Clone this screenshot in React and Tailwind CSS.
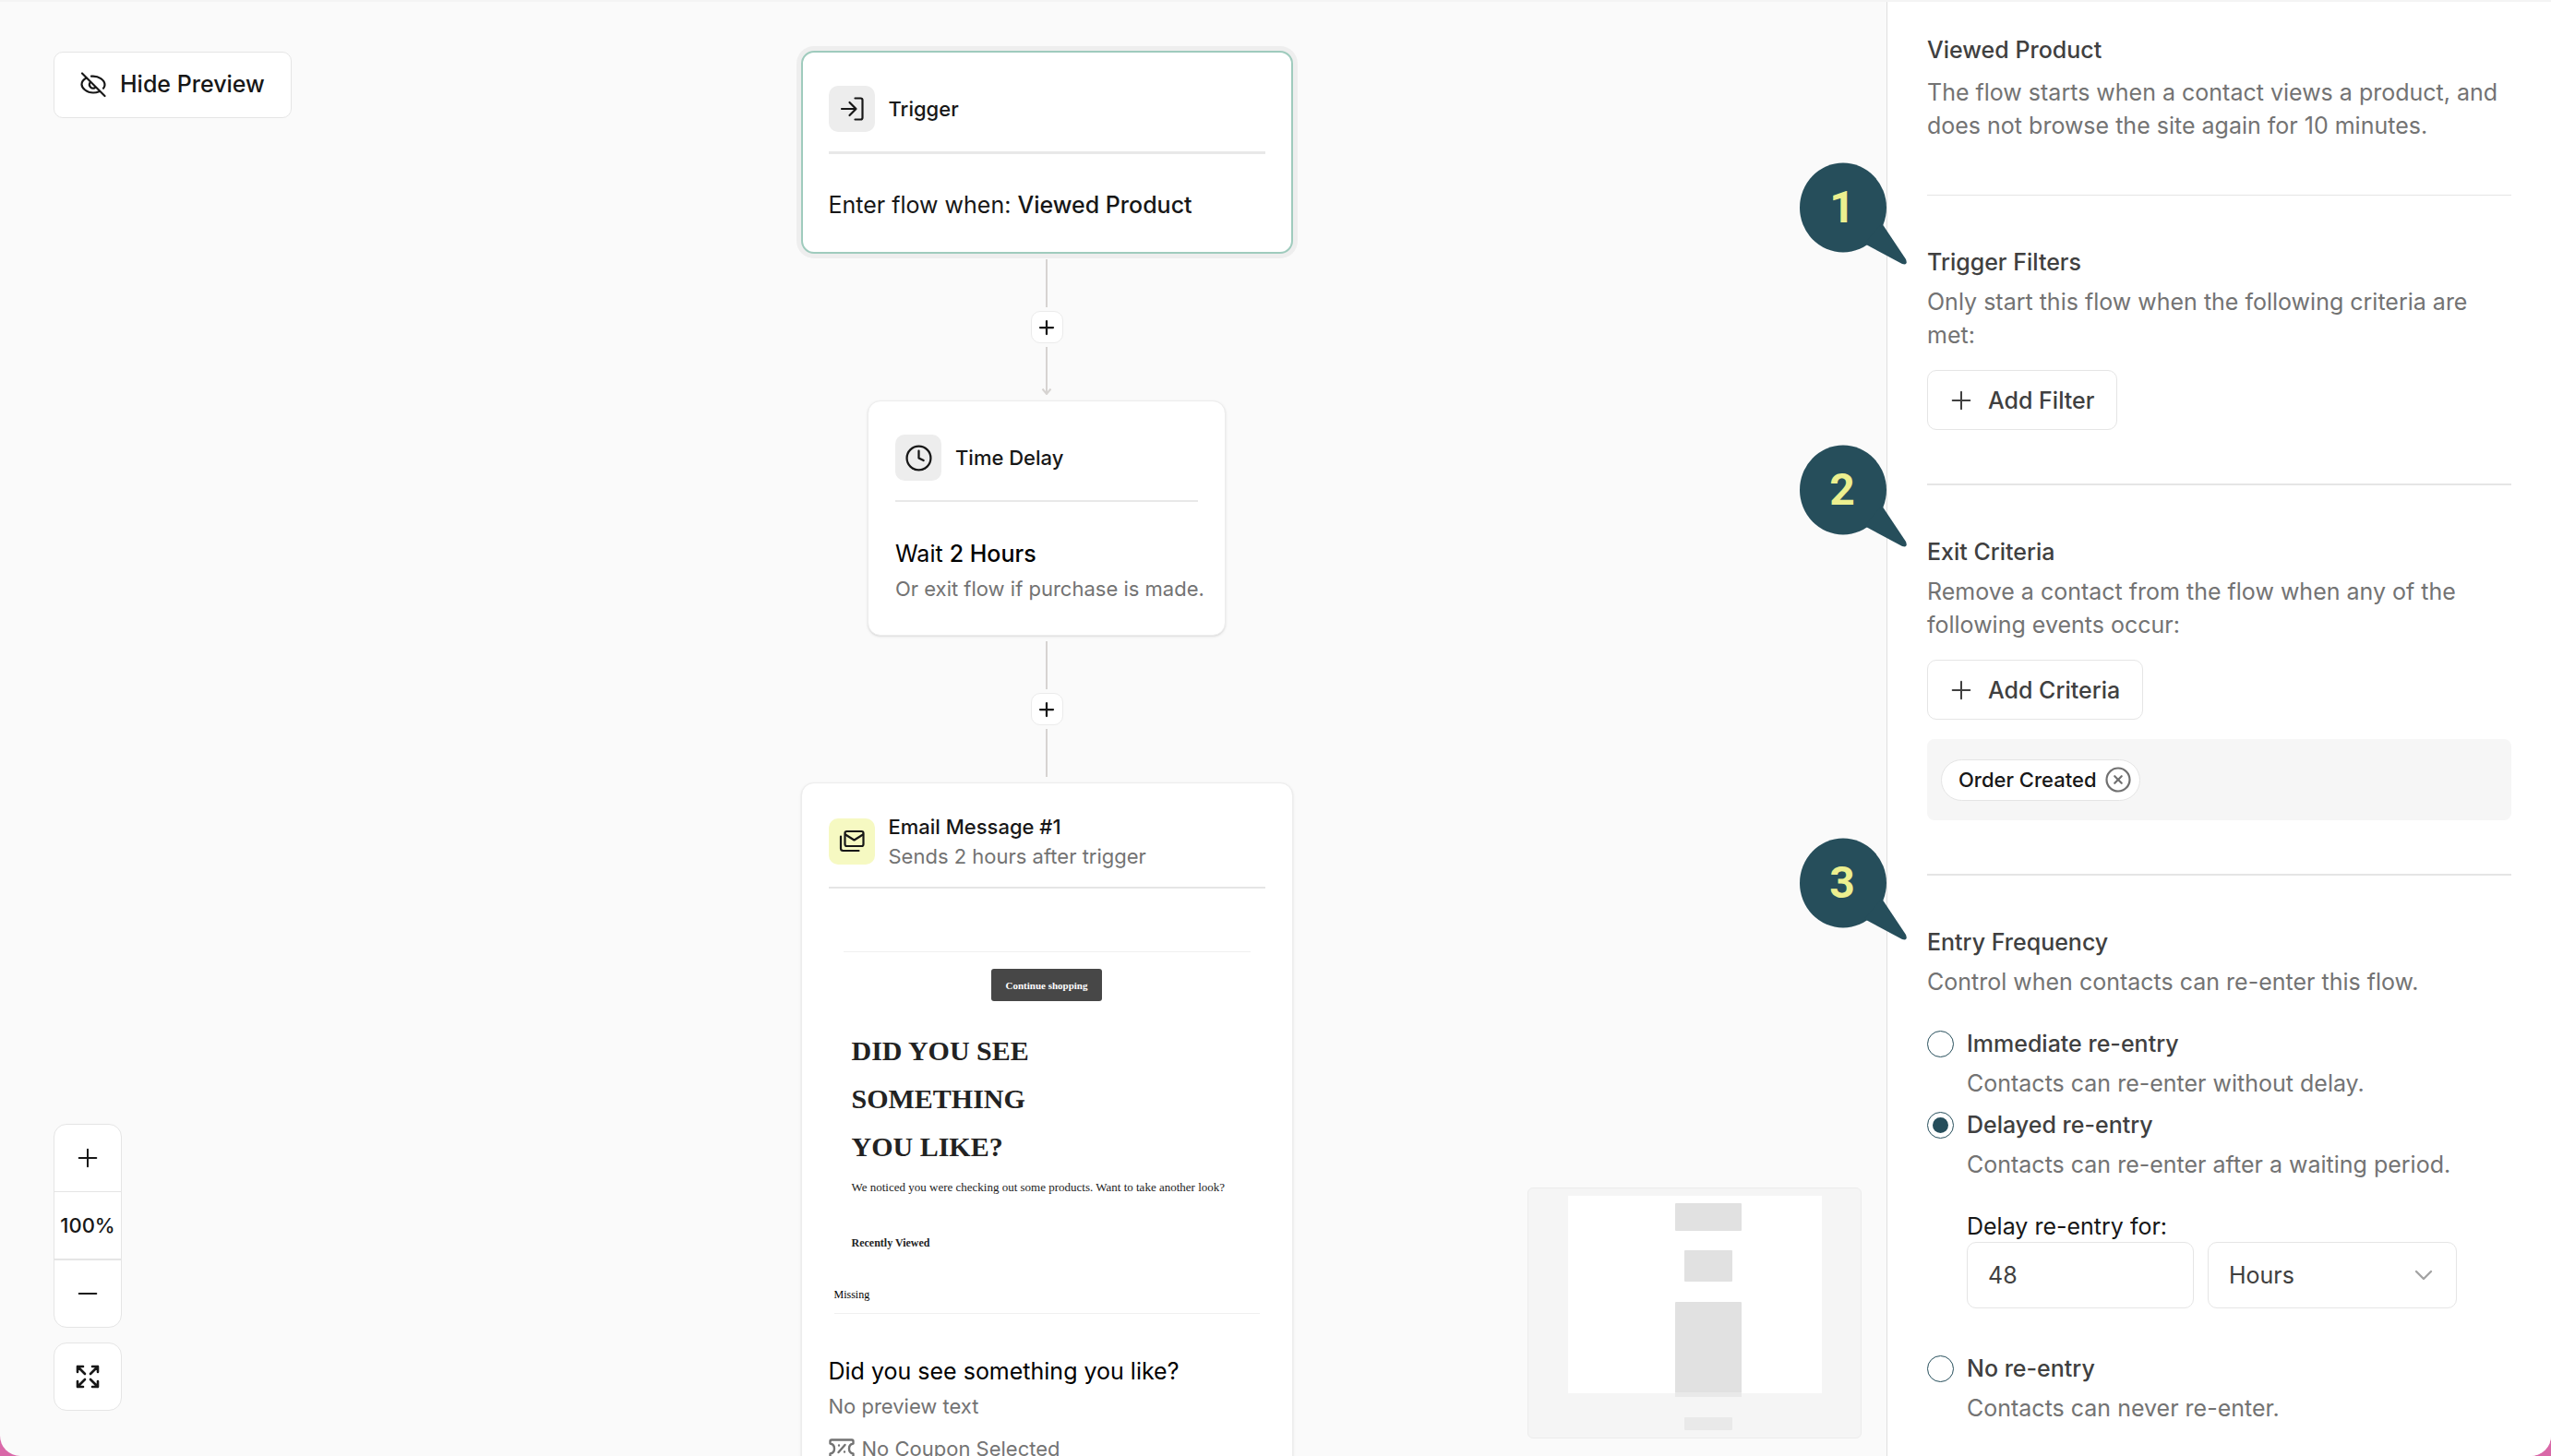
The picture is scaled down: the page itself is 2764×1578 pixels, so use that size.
import { useState } from 'react'
import { Clock, Plus, Minus, CircleX, ChevronDown } from 'lucide-react'

export default function App() {
  return (
    <div className="h-screen bg-[#d968a8] font-['Inter','Liberation_Sans',sans-serif] text-[#171717]">
      <div className="flex h-full overflow-hidden rounded-b-[22px] border-t-2 border-[#f4f4f4] bg-[#fafafa]">
        <Canvas />
        <Sidebar />
      </div>
    </div>
  )
}

function Canvas() {
  return (
    <main className="relative min-w-0 flex-1 overflow-hidden">
      <div className="flex flex-col items-center pt-[53px] pl-56">
        <TriggerNode />
        <Connector arrow />
        <DelayNode />
        <Connector />
        <EmailNode />
      </div>

      <button className="absolute top-[54px] left-[58px] flex h-[72px] items-center gap-[15px] rounded-[10px] border border-[#e5e5e5] bg-white px-7 text-[25px] font-medium">
        <EyeOffIcon />
        Hide Preview
      </button>

      <div className="absolute bottom-[49px] left-[58px] flex w-[74px] flex-col gap-4">
        <div className="flex flex-col overflow-hidden rounded-[14px] border border-[#e5e5e5] bg-white">
          <button aria-label="Zoom in" className="flex h-[73px] items-center justify-center border-b border-[#e5e5e5]">
            <Plus size={32} strokeWidth={1.5} />
          </button>
          <span className="flex h-[74px] items-center justify-center border-b-2 border-[#e5e5e5] text-[22px] font-medium">
            100%
          </span>
          <button aria-label="Zoom out" className="flex h-[72px] items-center justify-center">
            <Minus size={32} strokeWidth={1.5} />
          </button>
        </div>
        <button aria-label="Fit to screen" className="flex h-[74px] items-center justify-center rounded-[14px] border border-[#e5e5e5] bg-white">
          <ExpandIcon />
        </button>
      </div>

      <MiniMap />
    </main>
  )
}

function TriggerNode() {
  return (
    <article className="w-[533px] rounded-[14px] border-2 border-[#9fcbbd] bg-white px-7 pt-9 pb-[33px] ring-[5px] ring-[#eeeeee]">
      <div className="flex items-center gap-[15px] border-b-3 border-[#e8e8e8] pb-[21px]">
        <IconTile>
          <EnterIcon />
        </IconTile>
        <h2 className="text-[22px] leading-8 font-medium">Trigger</h2>
      </div>
      <p className="pt-[37px] text-[25px] leading-9">
        Enter flow when: <span className="font-medium">Viewed Product</span>
      </p>
    </article>
  )
}

function DelayNode() {
  return (
    <article className="w-[388px] rounded-[14px] border border-[#ededed] bg-white px-[29px] pt-9 pb-[34px] shadow-sm">
      <div className="flex items-center gap-[15px] border-b-2 border-[#e8e8e8] pb-[21px]">
        <IconTile>
          <Clock size={31} strokeWidth={1.75} />
        </IconTile>
        <h2 className="text-[22px] leading-8 font-medium">Time Delay</h2>
      </div>
      <p className="pt-[38px] text-[25px] leading-9 text-black">
        Wait <span className="font-medium">2 Hours</span>
      </p>
      <p className="pt-1 text-[22px] leading-8 whitespace-nowrap text-[#737373]">Or exit flow if purchase is made.</p>
    </article>
  )
}

function EmailNode() {
  return (
    <article className="w-[533px] rounded-[14px] border border-[#ededed] bg-white px-[29px] pt-[31px] pb-9 shadow-sm">
      <div className="flex items-center gap-[15px] border-b-2 border-[#e5e5e5] pb-[17px]">
        <IconTile tone="bg-[#f6f9c2]">
          <MailStackIcon />
        </IconTile>
        <div className="text-[22px] leading-8">
          <h2 className="font-medium">Email Message #1</h2>
          <p className="text-[#737373]">Sends 2 hours after trigger</p>
        </div>
      </div>

      <EmailPreview />

      <p className="pt-11 text-[25px] leading-9 text-black">Did you see something you like?</p>
      <p className="pt-1 text-[22px] leading-8 text-[#737373]">No preview text</p>
      <p className="flex items-center gap-2 pt-[14px] text-[22px] leading-8 text-[#737373]">
        <CouponIcon />
        No Coupon Selected
      </p>
    </article>
  )
}

function EmailPreview() {
  return (
    <div className="px-[6px] pt-[68px] font-['Liberation_Serif',serif] text-xs leading-5 text-[#222222]">
      <div className="mx-[10px] flex justify-center border-t border-[#f0f0f0] pt-[18px]">
        <button className="h-[35px] rounded-[3px] bg-[#474747] px-4 text-[11px] font-bold text-white">
          Continue shopping
        </button>
      </div>
      <div className="px-[19px] pt-7">
        <h3 className="text-[30px] leading-[52px] font-bold">
          DID YOU SEE
          <br />
          SOMETHING
          <br />
          YOU LIKE?
        </h3>
        <p className="pt-2 text-[13px]">We noticed you were checking out some products. Want to take another look?</p>
        <p className="pt-10 font-bold">Recently Viewed</p>
      </div>
      <p className="border-b border-[#f0f0f0] pt-9 pb-[10px] text-black">Missing</p>
    </div>
  )
}

function IconTile({ tone = 'bg-[#ededed]', children }) {
  return (
    <span className={`flex size-[50px] shrink-0 items-center justify-center rounded-[10px] ${tone}`}>
      {children}
    </span>
  )
}

function Connector({ arrow = false }) {
  return (
    <div className="flex flex-col items-center gap-1 py-[6px]">
      <span className="h-[52px] w-0.5 bg-[#d6d3d1]" />
      <button aria-label="Add step" className="flex size-[35px] items-center justify-center rounded-[10px] border border-[#ebebeb] bg-white">
        <Plus size={24} strokeWidth={2.25} />
      </button>
      {arrow ? (
        <svg className="h-[52px] w-3" viewBox="0 0 12 52" fill="none" stroke="#d6d3d1" strokeWidth="2">
          <path d="M6 0V51M1.5 45.5L6 51l4.5-5.5" />
        </svg>
      ) : (
        <span className="h-[52px] w-0.5 bg-[#d6d3d1]" />
      )}
    </div>
  )
}

function MiniMap() {
  return (
    <svg
      className="absolute right-[27px] bottom-[19px] h-[272px] w-[362px] rounded-md border border-[#ececec] bg-[#f5f5f5]"
      viewBox="0 0 360 270"
    >
      <rect x="43" y="8" width="275" height="214" fill="#fff" />
      <g fill="#e1e1e1">
        <rect x="159" y="16" width="72" height="30" rx="1" />
        <rect x="169" y="67" width="52" height="34" rx="1" />
        <rect x="159" y="123" width="72" height="99" rx="1" />
      </g>
      <g fill="#e9e9e9">
        <rect x="159" y="221" width="72" height="5" />
        <rect x="169" y="248" width="52" height="14" rx="1" />
      </g>
    </svg>
  )
}

const SECTION = 'relative pt-[54px]'
const TITLE = 'text-[25px] leading-9 font-medium text-[#404040]'
const BODY = 'text-[25px] leading-9 text-[#737373]'

function Sidebar() {
  return (
    <aside className="relative z-10 w-[720px] shrink-0 border-l border-[#e0e0e0] bg-white pr-[43px] pl-[43px] text-[25px] leading-9">
      <section className="border-b border-[#e5e5e5] pt-[34px] pb-[57px]">
        <h2 className={TITLE}>Viewed Product</h2>
        <p className={`${BODY} pt-[10px]`}>
          The flow starts when a contact views a product, and
          <br />
          does not browse the site again for 10 minutes.
        </p>
      </section>

      <section className={`${SECTION} border-b-2 border-[#e5e5e5] pb-[58px]`}>
        <Callout n={1} className="-top-9" />
        <h2 className={TITLE}>Trigger Filters</h2>
        <p className={`${BODY} pt-[7px] pb-5`}>
          Only start this flow when the following criteria are
          <br />
          met:
        </p>
        <AddButton>Add Filter</AddButton>
      </section>

      <section className={`${SECTION} border-b-2 border-[#e5e5e5] pb-[58px]`}>
        <Callout n={2} className="-top-11" />
        <h2 className={TITLE}>Exit Criteria</h2>
        <p className={`${BODY} pt-[7px] pb-5`}>
          Remove a contact from the flow when any of the
          <br />
          following events occur:
        </p>
        <AddButton>Add Criteria</AddButton>
        <div className="mt-[21px] flex h-[88px] items-center rounded-lg bg-[#f6f6f6] px-[15px]">
          <span className="flex h-[45px] items-center gap-2 rounded-full border border-[#e5e5e5] bg-white pr-2 pl-[18px] text-[22px] font-medium text-[#171717]">
            Order Created
            <button aria-label="Remove Order Created" className="text-[#707070]">
              <CircleX size={30} strokeWidth={1.75} />
            </button>
          </span>
        </div>
      </section>

      <EntryFrequency />
    </aside>
  )
}

function EntryFrequency() {
  const [mode, setMode] = useState('delayed')
  const option = value => ({ value, checked: mode === value, onChange: () => setMode(value) })

  return (
    <section className={SECTION}>
      <Callout n={3} className="-top-[41px]" />
      <h2 className={TITLE}>Entry Frequency</h2>
      <p className={`${BODY} pt-[7px] pb-[31px]`}>Control when contacts can re-enter this flow.</p>

      <div className="flex flex-col gap-[9px]">
        <RadioRow {...option('immediate')} label="Immediate re-entry" hint="Contacts can re-enter without delay." />
        <RadioRow {...option('delayed')} label="Delayed re-entry" hint="Contacts can re-enter after a waiting period." />
      </div>

      <div className="pt-8 pb-[47px] pl-[43px]">
        <label htmlFor="delay" className="block leading-[34px] text-[#171717]">Delay re-entry for:</label>
        <div className="flex gap-[15px] text-[#404040]">
          <input
            id="delay"
            type="text"
            defaultValue="48"
            className="h-[72px] w-[246px] rounded-[10px] border border-[#e5e5e5] bg-white px-[22px]"
          />
          <div className="relative">
            <select
              aria-label="Delay unit"
              defaultValue="Hours"
              className="h-[72px] w-[270px] appearance-none rounded-[10px] border border-[#e5e5e5] bg-white px-[22px]"
            >
              <option>Minutes</option>
              <option>Hours</option>
              <option>Days</option>
            </select>
            <ChevronDown size={32} strokeWidth={1.75} className="pointer-events-none absolute top-5 right-5 text-[#a3a3a3]" />
          </div>
        </div>
      </div>

      <RadioRow {...option('never')} label="No re-entry" hint="Contacts can never re-enter." />
    </section>
  )
}

function RadioRow({ label, hint, value, checked, onChange }) {
  return (
    <label className="grid grid-cols-[29px_1fr] items-center gap-x-[14px] gap-y-[7px]">
      <input
        type="radio"
        name="re-entry"
        value={value}
        checked={checked}
        onChange={onChange}
        className="grid size-[29px] appearance-none place-items-center rounded-full border border-[#264e5b] bg-white before:size-[17px] before:rounded-full checked:before:bg-[#264e5b]"
      />
      <span className="font-medium text-[#404040]">{label}</span>
      <span className="col-start-2 text-[#737373]">{hint}</span>
    </label>
  )
}

function AddButton({ children }) {
  return (
    <button className="flex h-[65px] items-center gap-[13px] rounded-[10px] border border-[#e5e5e5] bg-white pr-6 pl-5 font-medium text-[#404040]">
      <Plus size={32} strokeWidth={1.5} />
      {children}
    </button>
  )
}

function Callout({ n, className }) {
  return (
    <div className={`absolute -left-[138px] h-[112px] w-[118px] ${className}`}>
      <svg className="absolute inset-0" viewBox="0 0 118 112" width="118" height="112" fill="#264e5b">
        <ellipse cx="47" cy="49" rx="47" ry="48.5" />
        <path d="M89 66L115 105Q117.500 112 111 110L70 88Z" />
      </svg>
      <span className="relative flex h-[97px] w-[92px] items-center justify-center font-['Roboto',sans-serif] text-5xl font-bold text-[#ecef8f]">
        {n}
      </span>
    </div>
  )
}

function EyeOffIcon() {
  return (
    <svg width="28" height="28" viewBox="0 0 28 28" fill="none" stroke="currentColor" strokeWidth="2.2" strokeLinecap="round">
      <path d="M2 1.500L26.500 26" />
      <path d="M6.500 6.500C3.500 8.200 1.500 11 1.500 13.500C1.500 17.500 7 22.500 14 22.500C16.500 22.500 18.500 22 20.300 21.200" />
      <path d="M12 4.700C20 3.800 26.500 9 26.500 14C26.500 15.300 26 16.600 25 17.700" />
      <path d="M10.500 11.500A4 4 0 0 0 16 17" />
    </svg>
  )
}

function EnterIcon() {
  return (
    <svg width="28" height="28" viewBox="0 0 28 28" fill="none" stroke="currentColor" strokeWidth="2.2" strokeLinecap="round" strokeLinejoin="round">
      <path d="M3 14H18.500M11.500 7L18.500 14L11.500 21" />
      <path d="M17.500 2.500H23.500Q25.500 2.500 25.500 4.500V23.500Q25.500 25.500 23.500 25.500H17.500" />
    </svg>
  )
}

function MailStackIcon() {
  return (
    <svg width="28" height="28" viewBox="0 0 28 28" fill="none" stroke="currentColor" strokeWidth="2.2" strokeLinecap="round" strokeLinejoin="round">
      <rect x="6.500" y="3" width="20" height="16" rx="2" />
      <path d="M7 6.500L16.500 12.500L26 6.500" />
      <path d="M2 8.500V21.500Q2 24 4.500 24H21.500" />
    </svg>
  )
}

function CouponIcon() {
  return (
    <svg width="28" height="28" viewBox="0 0 28 28" fill="none" stroke="currentColor" strokeWidth="2.4" strokeLinecap="round" strokeLinejoin="round">
      <path d="M3 4.500H25Q26.500 4.500 26.500 6V8.500C20.500 9.500 20.500 18.500 26.500 19.500V22Q26.500 23.500 25 23.500H3Q1.500 23.500 1.500 22V19.500C7.500 18.500 7.500 9.500 1.500 8.500V6Q1.500 4.500 3 4.500Z" />
      <path d="M17.500 10L10.500 18M11 10.500V10.600M17 17.500V17.600" />
    </svg>
  )
}

function ExpandIcon() {
  return (
    <svg width="28" height="28" viewBox="0 0 28 28" fill="none" stroke="currentColor" strokeWidth="2.6" strokeLinecap="round" strokeLinejoin="round">
      <path d="M3 9V3H9M3 3L11 11" />
      <path d="M19 3H25V9M25 3L17 11" />
      <path d="M3 19V25H9M3 25L11 17" />
      <path d="M19 25H25V19M25 25L17 17" />
    </svg>
  )
}
